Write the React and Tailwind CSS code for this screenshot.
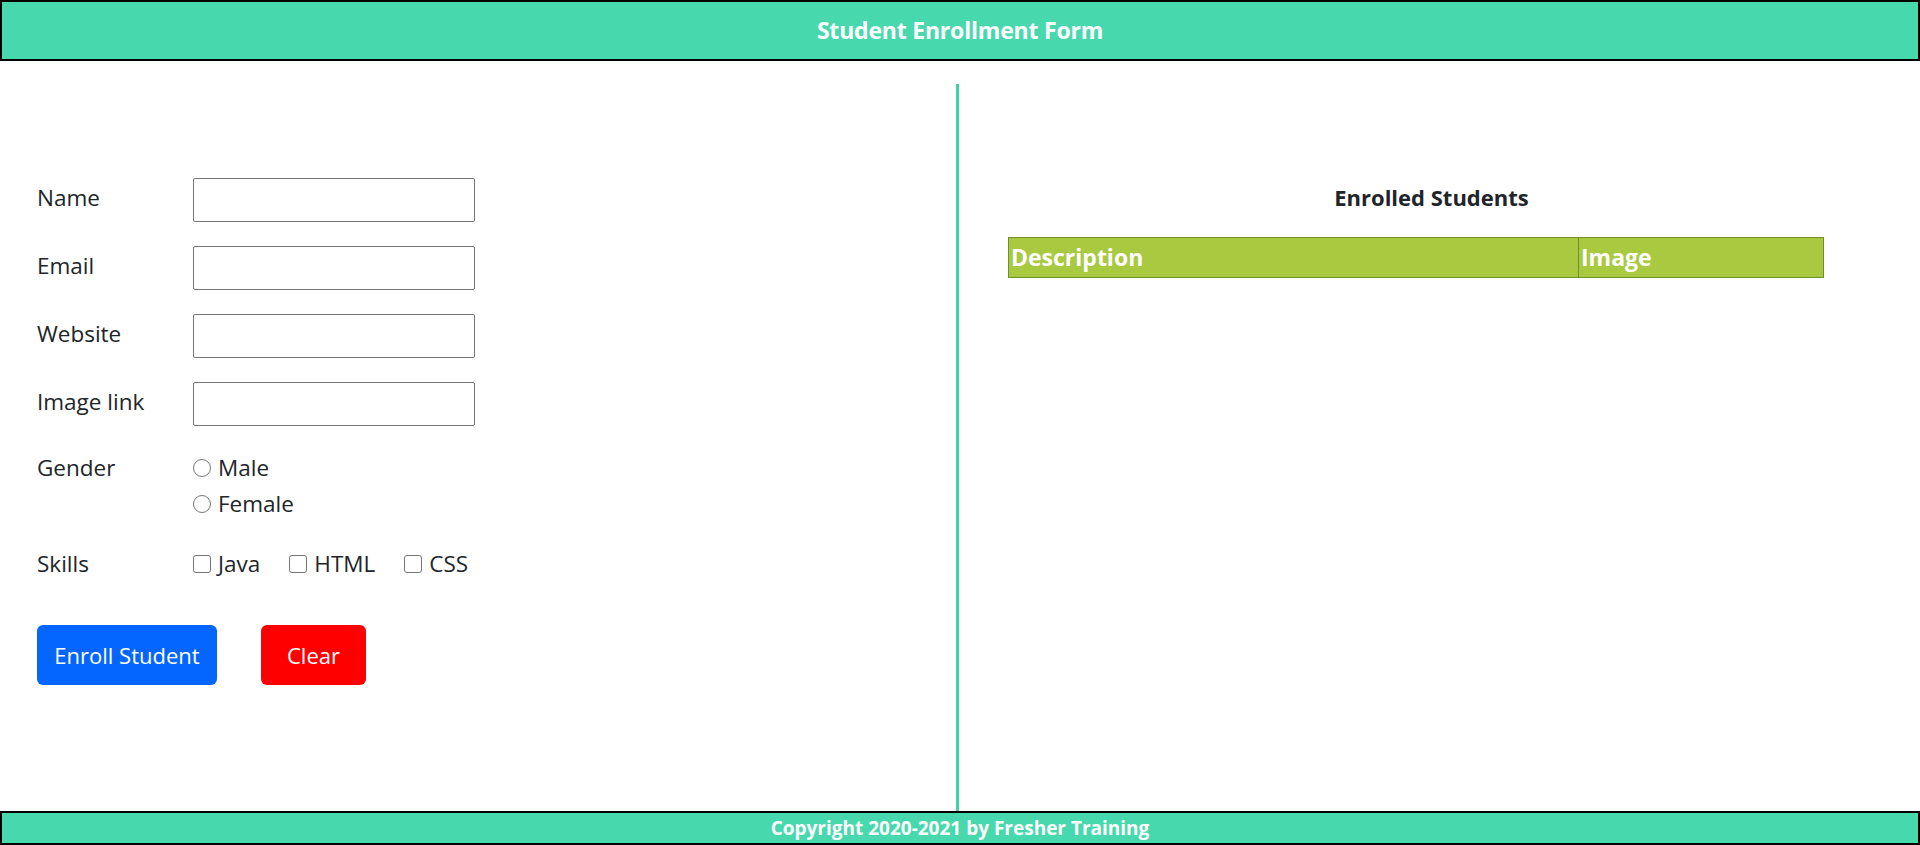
import React from 'react';

const fields = ['Name', 'Email', 'Website', 'Image link'];
const skills = ['Java', 'HTML', 'CSS'];

export default function App() {
    return (
        <div className="w-[1920px] h-[845px] flex flex-col bg-white text-[#212529]" style={{ fontFamily: '"Open Sans", "Noto Sans", sans-serif' }}>
            {/* Header */}
            <div className="h-[61px] shrink-0 bg-[#47d9ad] border-2 border-black flex items-center justify-center">
                <h1 className="text-white font-bold text-[23px] tracking-[-0.2px]">Student Enrollment Form</h1>
            </div>

            <div className="flex flex-1 min-h-0">
                {/* Form */}
                <div className="w-[956px] shrink-0 pl-[37px] pt-[117px]">
                    <div className="flex flex-col gap-6 text-[22.5px]">
                        {fields.map((f) => (
                            <div key={f} className="flex items-center h-[44px]">
                                <label className="w-[156px] -mt-[5px]">{f}</label>
                                <input type="text" className="w-[282px] h-[44px] border border-[#767676] rounded-[2px] outline-none" />
                            </div>
                        ))}

                        <div className="flex">
                            <span className="w-[156px] leading-[36px]">Gender</span>
                            <div className="flex flex-col">
                                {['Male', 'Female'].map((g) => (
                                    <label key={g} className="flex items-center gap-[7px] leading-[36px]">
                                        <input type="radio" name="gender" className="appearance-none w-[18px] h-[18px] rounded-full border border-[#767676] bg-white" />
                                        {g}
                                    </label>
                                ))}
                            </div>
                        </div>

                        <div className="flex">
                            <span className="w-[156px] leading-[36px]">Skills</span>
                            <div className="flex gap-[29px]">
                                {skills.map((s) => (
                                    <label key={s} className="flex items-center gap-[7px] leading-[36px]">
                                        <input type="checkbox" className="appearance-none w-[18px] h-[18px] rounded-[3px] border border-[#767676] bg-white" />
                                        {s}
                                    </label>
                                ))}
                            </div>
                        </div>

                        <div className="flex gap-[44px] mt-[19px]">
                            <button className="w-[180px] h-[60px] rounded-[6px] bg-[#0566ff] text-white text-[22px]">Enroll Student</button>
                            <button className="w-[105px] h-[60px] rounded-[6px] bg-[#ff0000] text-white text-[22px]">Clear</button>
                        </div>
                    </div>
                </div>

                {/* Divider */}
                <div className="w-[3px] shrink-0 mt-[23px] bg-[#45cfa7]"></div>

                {/* Enrolled list */}
                <div className="flex-1 pt-[120px]">
                    <h2 className="text-center font-bold text-[22px] leading-[32px] pr-[16px]">Enrolled Students</h2>
                    <table className="ml-[49px] mt-[24px] w-[816px] border-collapse">
                        <thead>
                            <tr className="bg-[#a8c940] text-white text-[23px] font-bold text-left h-[40px]">
                                <th className="border border-[#6f8f2a] pl-[2px] w-[570px]">Description</th>
                                <th className="border border-[#6f8f2a] pl-[2px]">Image</th>
                            </tr>
                        </thead>
                    </table>
                </div>
            </div>

            {/* Footer */}
            <div className="h-[34px] shrink-0 bg-[#47d9ad] border-2 border-black flex items-center justify-center">
                <p className="text-white font-bold text-[19px] leading-[26px]">Copyright 2020-2021 by Fresher Training</p>
            </div>
        </div>
    );
}
